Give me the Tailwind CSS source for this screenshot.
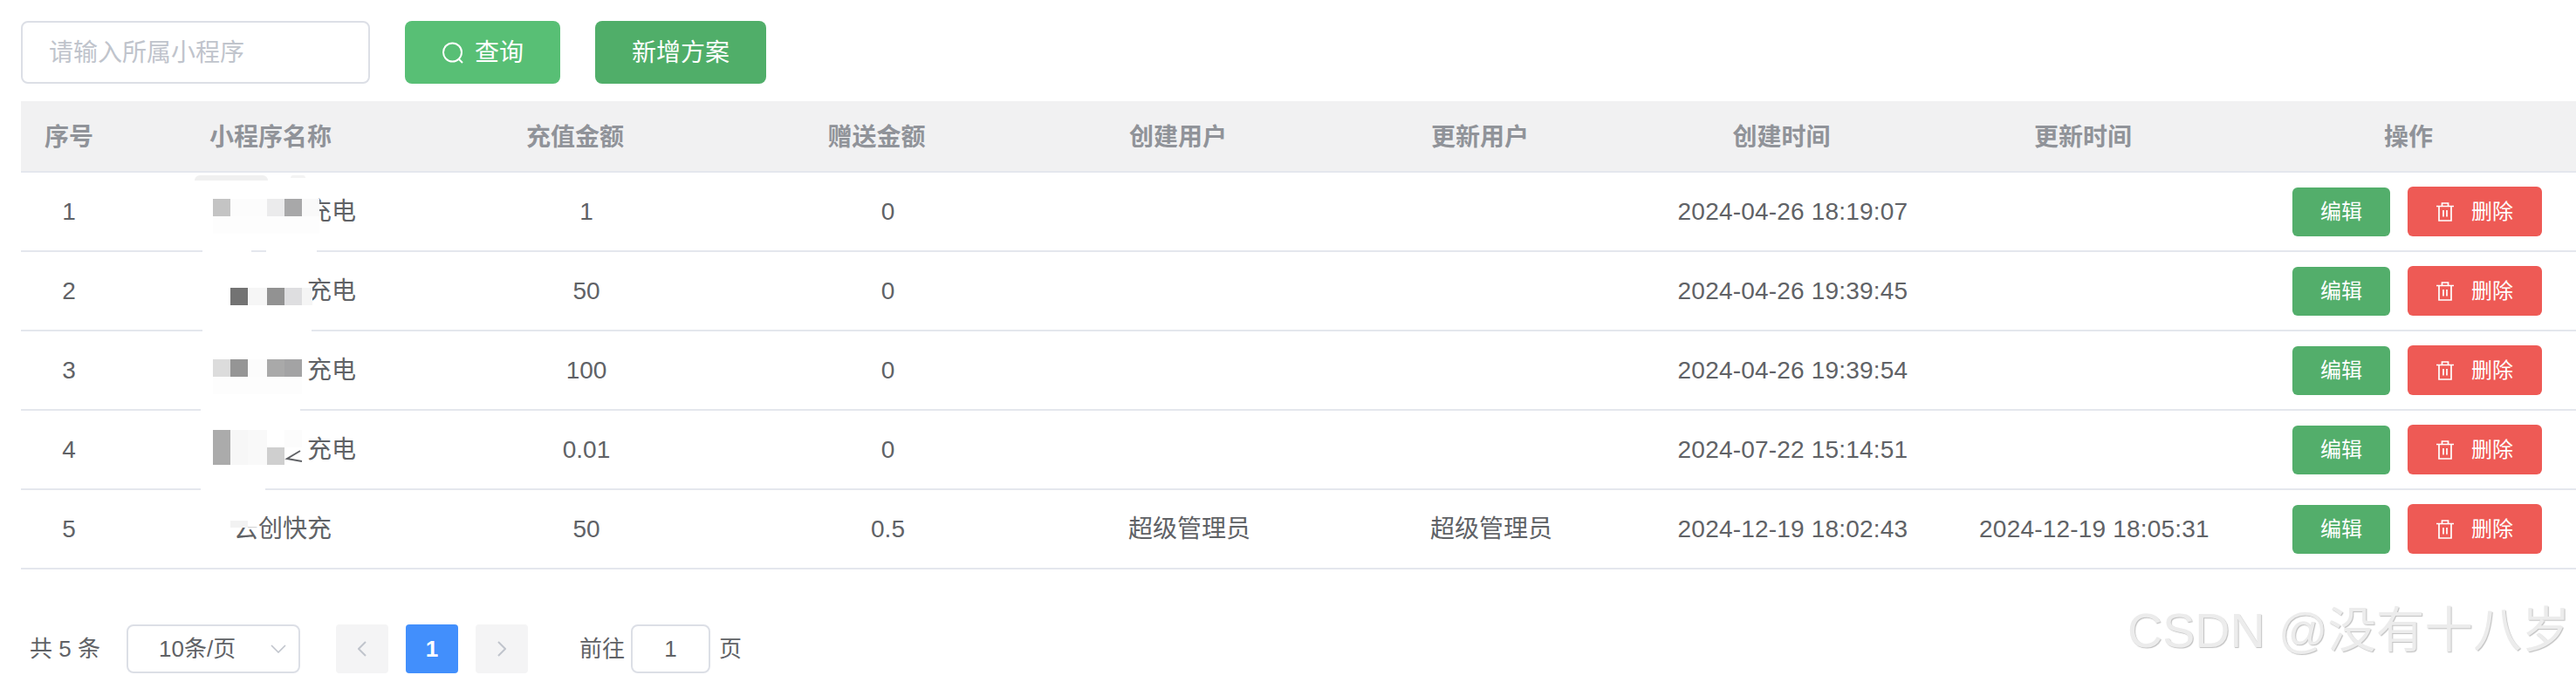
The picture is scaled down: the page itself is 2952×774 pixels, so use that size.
<!doctype html>
<html lang="zh">
<head>
    <meta charset="UTF-8">
    <title>充值方案</title>
    <script src="https://cdn.jsdelivr.net/npm/@tailwindcss/browser@4"></script>
</head>
<body class="bg-white overflow-hidden h-[774px] w-[2952px] relative [font-family:'Liberation_Sans','Noto_Sans_CJK_SC',sans-serif] text-[#606266]">
    <div class="pt-[24px] pl-[24px] w-[2960px]">
        <!-- toolbar -->
        <div class="flex items-center h-[72px] mb-[20px]">
            <input class="w-[400px] h-[72px] border-2 border-[#dcdfe6] rounded-[8px] pl-[30px] pt-[2px] text-[28px] outline-none placeholder:text-[#c0c4cc]" placeholder="请输入所属小程序">
            <button class="ml-[40px] w-[178px] h-[72px] pt-[2px] rounded-[8px] bg-[#58bf75] text-white text-[28px] flex items-center justify-center gap-[12px]">
                <svg class="w-[26px] h-[26px]" viewBox="0 0 26 26" fill="none" stroke="white" stroke-width="2"><circle cx="12.5" cy="12" r="10.5"/><path d="M20 20l4 4"/></svg>
                查询
            </button>
            <button class="ml-[40px] w-[196px] h-[72px] pt-[2px] rounded-[8px] bg-[#50ae69] text-white text-[28px]">新增方案</button>
        </div>

        <!-- table -->
        <table class="table-fixed border-separate border-spacing-0 w-[2936px] text-[28px] text-center">
            <colgroup>
                <col class="w-[110px]"><col class="w-[352px]"><col class="w-[346px]"><col class="w-[345px]"><col class="w-[346px]"><col class="w-[346px]"><col class="w-[345px]"><col class="w-[346px]"><col class="w-[400px]">
            </colgroup>
            <thead>
                <tr class="bg-[#f1f1f2] text-[#909399] font-bold">
                    <th class="h-[82px] pt-[4px] border-b-2 border-[#e4e7ed]">序号</th>
                    <th class="pt-[4px] border-b-2 border-[#e4e7ed]">小程序名称</th>
                    <th class="pt-[4px] border-b-2 border-[#e4e7ed]">充值金额</th>
                    <th class="pt-[4px] border-b-2 border-[#e4e7ed]">赠送金额</th>
                    <th class="pt-[4px] border-b-2 border-[#e4e7ed]">创建用户</th>
                    <th class="pt-[4px] border-b-2 border-[#e4e7ed]">更新用户</th>
                    <th class="pt-[4px] border-b-2 border-[#e4e7ed]">创建时间</th>
                    <th class="pt-[4px] border-b-2 border-[#e4e7ed]">更新时间</th>
                    <th class="pt-[4px] border-b-2 border-[#e4e7ed]">操作</th>
                </tr>
            </thead>
            <tbody>
                <tr>
                    <td class="h-[91px] border-b-2 border-[#e4e7ed]">1</td>
                    <td class="relative border-b-2 border-[#e4e7ed]">
                        <div class="w-[196px] mx-auto text-right">充电</div>
                        <div class="absolute left-[89px] top-[3px] w-[84px] h-[6px] bg-[#f0f0f0] rounded-t-[40px]"></div>
                        <div class="absolute left-[199px] top-[3px] w-[17px] h-[3px] bg-[#f3f3f3] rounded-t-[40px]"></div>
                        <div class="absolute left-[110px] top-[30px] flex">
                            <div class="w-[20px] h-[20px] bg-[#c4c4c4]"></div>
                            <div class="w-[20px] h-[20px] bg-[#fcfcfc]"></div>
                            <div class="w-[22px] h-[20px] bg-[#fcfcfc]"></div>
                            <div class="w-[20px] h-[20px] bg-[#ebebec]"></div>
                            <div class="w-[20px] h-[20px] bg-[#a8a8a9]"></div>
                            <div class="w-[20px] h-[20px] bg-[#f9f9f9]"></div>
                        </div>
                        <div class="absolute left-[110px] top-[50px] w-[122px] h-[20px] bg-[#fdfdfd]"></div>
                        <div class="absolute left-[98px] bottom-[-2px] w-[56px] h-[2px] bg-white"></div>
                        <div class="absolute left-[171px] bottom-[-2px] w-[58px] h-[2px] bg-white"></div>
                    </td>
                    <td class="pl-[26px] border-b-2 border-[#e4e7ed]">1</td>
                    <td class="pl-[26px] border-b-2 border-[#e4e7ed]">0</td>
                    <td class="pl-[26px] border-b-2 border-[#e4e7ed]"></td>
                    <td class="pl-[26px] border-b-2 border-[#e4e7ed]"></td>
                    <td class="pl-[26px] tracking-[0.2px] border-b-2 border-[#e4e7ed]">2024-04-26 18:19:07</td>
                    <td class="pl-[26px] tracking-[0.2px] border-b-2 border-[#e4e7ed]"></td>
                    <td class="border-b-2 border-[#e4e7ed]">
                        <div class="flex items-center pl-[67px] gap-[20px] text-[24px] text-white">
                            <button class="w-[112px] h-[56px] rounded-[6px] bg-[#53ae6b]">编辑</button>
                            <button class="w-[154px] h-[57px] rounded-[6px] bg-[#ee5a55] flex items-center justify-center gap-[20px]">
                                <svg class="w-[20px] h-[22px]" viewBox="0 0 20 22" fill="none" stroke="white" stroke-width="1.7"><path d="M0 4.5h20M3 4.5v16.500h14v-16.500M6.500 4.500v-3.500h7v3.500M8 9v7.500M12 9v7.500"/></svg>
                                删除
                            </button>
                        </div>
                    </td>
                </tr>
                <tr>
                    <td class="h-[91px] border-b-2 border-[#e4e7ed]">2</td>
                    <td class="relative border-b-2 border-[#e4e7ed]">
                        <div class="w-[196px] mx-auto text-right">充电</div>
                        <div class="absolute left-[130px] top-[41px] flex">
                            <div class="w-[20px] h-[20px] bg-[#737373]"></div>
                            <div class="w-[22px] h-[20px] bg-[#f6f6f6]"></div>
                            <div class="w-[20px] h-[20px] bg-[#929292]"></div>
                            <div class="w-[20px] h-[20px] bg-[#dedee0]"></div>
                            <div class="w-[12px] h-[20px] bg-[#f5f5f5]"></div>
                        </div>
                        <div class="absolute left-[98px] bottom-[-2px] w-[125px] h-[2px] bg-white"></div>
                    </td>
                    <td class="pl-[26px] border-b-2 border-[#e4e7ed]">50</td>
                    <td class="pl-[26px] border-b-2 border-[#e4e7ed]">0</td>
                    <td class="pl-[26px] border-b-2 border-[#e4e7ed]"></td>
                    <td class="pl-[26px] border-b-2 border-[#e4e7ed]"></td>
                    <td class="pl-[26px] tracking-[0.2px] border-b-2 border-[#e4e7ed]">2024-04-26 19:39:45</td>
                    <td class="pl-[26px] tracking-[0.2px] border-b-2 border-[#e4e7ed]"></td>
                    <td class="border-b-2 border-[#e4e7ed]">
                        <div class="flex items-center pl-[67px] gap-[20px] text-[24px] text-white">
                            <button class="w-[112px] h-[56px] rounded-[6px] bg-[#53ae6b]">编辑</button>
                            <button class="w-[154px] h-[57px] rounded-[6px] bg-[#ee5a55] flex items-center justify-center gap-[20px]">
                                <svg class="w-[20px] h-[22px]" viewBox="0 0 20 22" fill="none" stroke="white" stroke-width="1.7"><path d="M0 4.5h20M3 4.5v16.500h14v-16.500M6.500 4.500v-3.500h7v3.500M8 9v7.500M12 9v7.500"/></svg>
                                删除
                            </button>
                        </div>
                    </td>
                </tr>
                <tr>
                    <td class="h-[91px] border-b-2 border-[#e4e7ed]">3</td>
                    <td class="relative border-b-2 border-[#e4e7ed]">
                        <div class="w-[196px] mx-auto text-right">充电</div>
                        <div class="absolute left-[110px] top-[32px] flex">
                            <div class="w-[20px] h-[20px] bg-[#dcdcdc]"></div>
                            <div class="w-[20px] h-[20px] bg-[#959595]"></div>
                            <div class="w-[22px] h-[20px] bg-[#fcfcfc]"></div>
                            <div class="w-[20px] h-[20px] bg-[#a9a9a9]"></div>
                            <div class="w-[20px] h-[20px] bg-[#a3a3a4]"></div>
                            <div class="w-[7px] h-[20px] bg-white"></div>
                        </div>
                        <div class="absolute left-[110px] top-[52px] w-[102px] h-[20px] bg-[#fdfdfd]"></div>
                        <div class="absolute left-[96px] bottom-[-2px] w-[114px] h-[2px] bg-white"></div>
                    </td>
                    <td class="pl-[26px] border-b-2 border-[#e4e7ed]">100</td>
                    <td class="pl-[26px] border-b-2 border-[#e4e7ed]">0</td>
                    <td class="pl-[26px] border-b-2 border-[#e4e7ed]"></td>
                    <td class="pl-[26px] border-b-2 border-[#e4e7ed]"></td>
                    <td class="pl-[26px] tracking-[0.2px] border-b-2 border-[#e4e7ed]">2024-04-26 19:39:54</td>
                    <td class="pl-[26px] tracking-[0.2px] border-b-2 border-[#e4e7ed]"></td>
                    <td class="border-b-2 border-[#e4e7ed]">
                        <div class="flex items-center pl-[67px] gap-[20px] text-[24px] text-white">
                            <button class="w-[112px] h-[56px] rounded-[6px] bg-[#53ae6b]">编辑</button>
                            <button class="w-[154px] h-[57px] rounded-[6px] bg-[#ee5a55] flex items-center justify-center gap-[20px]">
                                <svg class="w-[20px] h-[22px]" viewBox="0 0 20 22" fill="none" stroke="white" stroke-width="1.7"><path d="M0 4.5h20M3 4.5v16.500h14v-16.500M6.500 4.500v-3.500h7v3.500M8 9v7.500M12 9v7.500"/></svg>
                                删除
                            </button>
                        </div>
                    </td>
                </tr>
                <tr>
                    <td class="h-[91px] border-b-2 border-[#e4e7ed]">4</td>
                    <td class="relative border-b-2 border-[#e4e7ed]">
                        <div class="w-[196px] mx-auto text-right">充电</div>
                        <div class="absolute left-[110px] top-[22px] w-[20px] h-[40px] bg-[#ababab]"></div>
                        <div class="absolute left-[130px] top-[22px] w-[20px] h-[40px] bg-[#f7f7f7]"></div>
                        <div class="absolute left-[150px] top-[22px] w-[22px] h-[40px] bg-[#f9f9f9]"></div>
                        <div class="absolute left-[172px] top-[42px] w-[20px] h-[20px] bg-[#cfcfcf]"></div>
                        <div class="absolute left-[192px] top-[22px] w-[20px] h-[20px] bg-[#fcfcfc]"></div>
                        <svg class="absolute left-[192px] top-[42px] w-[24px] h-[18px]" viewBox="0 0 24 18" fill="none" stroke="#606266" stroke-width="2"><path d="M18 4L3 13l17 3"/></svg>
                        <div class="absolute left-[96px] bottom-[-2px] w-[74px] h-[2px] bg-white"></div>
                    </td>
                    <td class="pl-[26px] border-b-2 border-[#e4e7ed]">0.01</td>
                    <td class="pl-[26px] border-b-2 border-[#e4e7ed]">0</td>
                    <td class="pl-[26px] border-b-2 border-[#e4e7ed]"></td>
                    <td class="pl-[26px] border-b-2 border-[#e4e7ed]"></td>
                    <td class="pl-[26px] tracking-[0.2px] border-b-2 border-[#e4e7ed]">2024-07-22 15:14:51</td>
                    <td class="pl-[26px] tracking-[0.2px] border-b-2 border-[#e4e7ed]"></td>
                    <td class="border-b-2 border-[#e4e7ed]">
                        <div class="flex items-center pl-[67px] gap-[20px] text-[24px] text-white">
                            <button class="w-[112px] h-[56px] rounded-[6px] bg-[#53ae6b]">编辑</button>
                            <button class="w-[154px] h-[57px] rounded-[6px] bg-[#ee5a55] flex items-center justify-center gap-[20px]">
                                <svg class="w-[20px] h-[22px]" viewBox="0 0 20 22" fill="none" stroke="white" stroke-width="1.7"><path d="M0 4.5h20M3 4.5v16.500h14v-16.500M6.500 4.500v-3.500h7v3.500M8 9v7.500M12 9v7.500"/></svg>
                                删除
                            </button>
                        </div>
                    </td>
                </tr>
                <tr>
                    <td class="h-[91px] border-b-2 border-[#e4e7ed]">5</td>
                    <td class="relative border-b-2 border-[#e4e7ed]">
                        <div class="w-[140px] mx-auto text-right">云创快充</div>
                        <div class="absolute left-[130px] top-[24px] w-[32px] h-[18px] bg-white"></div>
                        <div class="absolute left-[130px] top-[35px] w-[20px] h-[8px] bg-[#f2f2f2]"></div>
                    </td>
                    <td class="pl-[26px] border-b-2 border-[#e4e7ed]">50</td>
                    <td class="pl-[26px] border-b-2 border-[#e4e7ed]">0.5</td>
                    <td class="pl-[26px] border-b-2 border-[#e4e7ed]">超级管理员</td>
                    <td class="pl-[26px] border-b-2 border-[#e4e7ed]">超级管理员</td>
                    <td class="pl-[26px] tracking-[0.2px] border-b-2 border-[#e4e7ed]">2024-12-19 18:02:43</td>
                    <td class="pl-[26px] tracking-[0.2px] border-b-2 border-[#e4e7ed]">2024-12-19 18:05:31</td>
                    <td class="border-b-2 border-[#e4e7ed]">
                        <div class="flex items-center pl-[67px] gap-[20px] text-[24px] text-white">
                            <button class="w-[112px] h-[56px] rounded-[6px] bg-[#53ae6b]">编辑</button>
                            <button class="w-[154px] h-[57px] rounded-[6px] bg-[#ee5a55] flex items-center justify-center gap-[20px]">
                                <svg class="w-[20px] h-[22px]" viewBox="0 0 20 22" fill="none" stroke="white" stroke-width="1.7"><path d="M0 4.5h20M3 4.5v16.500h14v-16.500M6.500 4.500v-3.500h7v3.500M8 9v7.500M12 9v7.500"/></svg>
                                删除
                            </button>
                        </div>
                    </td>
                </tr>
            </tbody>
        </table>

        <!-- pagination -->
        <div class="flex items-center h-[56px] mt-[63px] text-[26px]">
            <span class="ml-[10px] w-[111px]">共 5 条</span>
            <div class="w-[199px] h-[56px] border-2 border-[#dcdfe6] rounded-[8px] flex items-center pl-[35px] pr-[14px] justify-between">
                <span>10条/页</span>
                <svg class="w-[18px] h-[10px]" viewBox="0 0 18 10" fill="none" stroke="#c0c4cc" stroke-width="1.6"><path d="M1 1l8 8 8-8"/></svg>
            </div>
            <div class="ml-[41px] w-[60px] h-[56px] bg-[#f4f4f5] rounded-[4px] flex items-center justify-center">
                <svg class="w-[10px] h-[18px]" viewBox="0 0 10 18" fill="none" stroke="#c0c4cc" stroke-width="2"><path d="M9 1l-8 8 8 8"/></svg>
            </div>
            <div class="ml-[20px] w-[60px] h-[56px] bg-[#428ffc] rounded-[4px] flex items-center justify-center text-white font-bold">1</div>
            <div class="ml-[20px] w-[60px] h-[56px] bg-[#f4f4f5] rounded-[4px] flex items-center justify-center">
                <svg class="w-[10px] h-[18px]" viewBox="0 0 10 18" fill="none" stroke="#c0c4cc" stroke-width="2"><path d="M1 1l8 8-8 8"/></svg>
            </div>
            <span class="ml-[59px]">前往</span>
            <div class="ml-[7px] w-[91px] h-[56px] border-2 border-[#dcdfe6] rounded-[8px] flex items-center justify-center">1</div>
            <span class="ml-[10px]">页</span>
        </div>
    </div>

    <!-- watermark -->
    <div class="absolute left-[2438px] top-[690px] text-[55.6px] leading-[66px] whitespace-nowrap text-[#ececec] [text-shadow:1px_1px_1px_#c0c0c0]">CSDN @没有十八岁</div>
</body>
</html>
